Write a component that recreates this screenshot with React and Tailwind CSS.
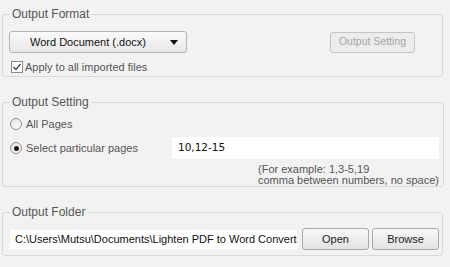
import React from 'react';

const font = { fontFamily: '"Liberation Sans", Arial, sans-serif' };

const Radio = ({ checked }) => (
  <span className="flex h-[12px] w-[12px] items-center justify-center rounded-full border border-[#8f8f8f] bg-gradient-to-br from-[#e4e4e4] to-white">
    {checked && <span className="h-[5px] w-[5px] rounded-full bg-[#1a1a1a]"></span>}
  </span>
);

const Btn = ({ children, className = '' }) => (
  <button
    className={`flex h-[22px] items-center justify-center rounded-[3px] border border-[#a9a9a9] bg-gradient-to-b from-[#f8f8f8] to-[#e2e2e2] text-[11px] text-[#222] ${className}`}
  >
    {children}
  </button>
);

export default function App() {
  return (
    <div className="h-[267px] w-[450px] overflow-hidden bg-[#f2f2f2] pl-[2px] pt-[7px] text-[#444]" style={font}>
      {/* Output Format */}
      <fieldset className="w-[441px] rounded-[3px] border border-[#d9d9d9] pb-[3px] pl-[7px] pr-[3px]">
        <legend className="px-[2px] text-[12px] leading-[14px] text-[#555]">Output Format</legend>
        <div className="mt-[10px] flex items-center">
          <div className="-ml-[1px] flex h-[22px] w-[178px] items-center rounded-[3px] border border-[#b3b3b3] bg-gradient-to-b from-[#fbfbfb] to-[#e6e6e6]">
            <span className="flex-1 pl-[10px] text-center text-[11px] text-[#111]">Word Document (.docx)</span>
            <svg width="8" height="5" viewBox="0 0 8 5" className="ml-[14px] mr-[8px]">
              <path d="M0 0 H8 L4 5 Z" fill="#111" />
            </svg>
          </div>
          <div className="flex-1"></div>
          <button className="mr-[24px] flex h-[21px] w-[85px] items-center justify-center rounded-[3px] border border-[#c4c4c4] bg-[#ececec] text-[10.5px] text-[#a5a5a5]">
            Output Setting
          </button>
        </div>
        <div className="mt-[8px] flex h-[12px] items-center">
          <span className="ml-[1px] flex h-[12px] w-[12px] items-center justify-center border border-[#8a8a8a] bg-white">
            <svg width="10" height="10" viewBox="0 0 10 10">
              <path d="M1.5 5 L4 7.5 L8.5 2" fill="none" stroke="#444" strokeWidth="1.3" />
            </svg>
          </span>
          <span className="ml-[2px] text-[11px] leading-[12px] text-[#555]">Apply to all imported files</span>
        </div>
      </fieldset>

      {/* Output Setting */}
      <fieldset className="mt-[18px] w-[441px] rounded-[3px] border border-[#d9d9d9] pl-[7px] pr-[4px]">
        <legend className="px-[2px] text-[12px] leading-[14px] text-[#555]">Output Setting</legend>
        <div className="mt-[7px] flex h-[16px] items-center">
          <Radio />
          <span className="ml-[4px] text-[11px] text-[#555]">All Pages</span>
        </div>
        <div className="mt-[5px] flex h-[22px] items-center">
          <Radio checked />
          <span className="ml-[4px] text-[11px] text-[#555]">Select particular pages</span>
          <div className="flex-1"></div>
          <div className="flex h-[22px] w-[267px] items-center bg-white pl-[6px] text-[10.5px] text-[#111]" style={{ fontFamily: '"DejaVu Sans", sans-serif' }}>
            10,12-15
          </div>
        </div>
        <div className="ml-[248px] mt-[5px] whitespace-nowrap text-[11px] leading-[11px] text-[#555]">
          <div>(For example: 1,3-5,19</div>
          <div>comma between numbers, no space)</div>
        </div>
      </fieldset>

      {/* Output Folder */}
      <fieldset className="mt-[18px] w-[441px] rounded-[3px] border border-[#d9d9d9] pb-[5px] pl-[7px] pr-[3px]">
        <legend className="px-[2px] text-[12px] leading-[14px] text-[#555]">Output Folder</legend>
        <div className="mt-[9px] flex h-[22px] items-center">
          <div className="flex h-[19px] w-[287px] items-center overflow-hidden whitespace-nowrap bg-white pl-[5px] text-[11px] text-[#111]">
            C:\Users\Mutsu\Documents\Lighten PDF to Word Converte
          </div>
          <Btn className="ml-[5px] w-[67px]">Open</Btn>
          <Btn className="ml-[3px] w-[67px]">Browse</Btn>
        </div>
      </fieldset>
    </div>
  );
}
